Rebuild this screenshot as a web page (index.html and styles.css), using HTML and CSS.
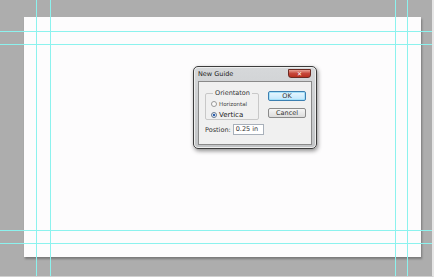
FILE: index.html
```html
<!DOCTYPE html>
<html lang="en">

<head>
    <meta charset="UTF-8">
    <meta name="viewport" content="width=device-width, initial-scale=1.0">
    <title>New Guide</title>
    <link rel="stylesheet" href="styles.css">
</head>

<body>
    <div class="stage">
        <div class="canvas"></div>

        <div class="guide v" style="left: 36px"></div>
        <div class="guide v" style="left: 50px"></div>
        <div class="guide v" style="left: 395px"></div>
        <div class="guide v" style="left: 407px"></div>
        <div class="guide h" style="top: 31px"></div>
        <div class="guide h" style="top: 44px"></div>
        <div class="guide h" style="top: 230px"></div>
        <div class="guide h" style="top: 243px"></div>

        <div class="dialog">
            <div class="titlebar">
                <span class="title">New Guide</span>
                <span class="close">&#x2715;</span>
            </div>
            <div class="body">
                <div class="left">
                    <fieldset class="group">
                        <legend>Orientaton</legend>
                        <label class="radio"><span class="dot"></span>Horizontal</label>
                        <label class="radio big"><span class="dot on"></span>Vertica</label>
                    </fieldset>
                    <div class="pos">
                        <span>Postion:</span>
                        <span class="input">0.25 in</span>
                    </div>
                </div>
                <div class="buttons">
                    <div class="btn ok">OK</div>
                    <div class="btn">Cancel</div>
                </div>
            </div>
        </div>
    </div>
</body>

</html>
```

FILE: styles.css
```css
body {
    margin: 0;
    font-family: "DejaVu Sans", "Liberation Sans", sans-serif;
}

.stage {
    position: relative;
    width: 434px;
    height: 277px;
    background-color: #adadad;
    overflow: hidden;
    padding-top: 17px;
    box-sizing: border-box;
    border-right: 2px solid #e6e6e6;
    border-bottom: 1px solid #d0d0d0;
}

.canvas {
    margin-left: 24px;
    width: 397px;
    height: 240px;
    background-color: #fdfcfd;
    box-shadow: 1px 2px 2px rgba(0, 0, 0, 0.3);
}

.guide {
    position: absolute;
    background-color: #8cf2ee;
}

.guide.v {
    top: 0;
    width: 1px;
    height: 277px;
}

.guide.h {
    left: 0;
    height: 1px;
    width: 434px;
}

.dialog {
    position: absolute;
    left: 193px;
    top: 66px;
    width: 122px;
    height: 81px;
    border: 1px solid #3c3c3c;
    border-radius: 5px;
    background: linear-gradient(#d6d8da, #c2c4c6);
    box-shadow: 1px 2px 4px rgba(0, 0, 0, 0.45), inset 0 0 0 1px #eeeeee;
    display: flex;
    flex-direction: column;
}

.titlebar {
    height: 14px;
    display: flex;
    align-items: center;
    justify-content: space-between;
    padding: 0 5px 0 4px;
}

.title {
    font-size: 6.5px;
    color: #222;
}

.close {
    width: 21px;
    height: 7px;
    margin-top: -2px;
    background: linear-gradient(#e8a194, #c6473a 50%, #b83020);
    border: 1px solid #6b2a22;
    border-radius: 0 0 3px 3px;
    color: #fff;
    font-size: 6px;
    line-height: 7px;
    text-align: center;
    font-weight: bold;
}

.body {
    flex: 1;
    margin: 0 4px 3px 4px;
    background-color: #f0f0f0;
    border: 1px solid #8a8a8a;
    display: flex;
    justify-content: space-between;
    padding: 7px 5px 0 6px;
}

.left {
    display: flex;
    flex-direction: column;
    gap: 4px;
}

.group {
    margin: 0;
    padding: 1px 4px 2px 5px;
    border: 1px solid #c8c8c8;
    border-radius: 2px;
    width: 43px;
    height: 26px;
    box-sizing: content-box;
}

.group legend {
    font-size: 6.5px;
    color: #333;
    padding: 0 2px;
    margin: 0 auto;
}

.radio {
    display: flex;
    align-items: center;
    gap: 2px;
    font-size: 5.5px;
    color: #444;
    height: 11px;
}

.radio.big {
    font-size: 7px;
    color: #222;
}

.dot {
    width: 4px;
    height: 4px;
    border: 1px solid #999;
    border-radius: 50%;
    background-color: #fafafa;
}

.dot.on {
    background: radial-gradient(#2a5fb0 45%, #dfe8f4 55%);
    border-color: #6a7a90;
}

.pos {
    display: flex;
    align-items: center;
    gap: 2px;
    font-size: 6.5px;
    color: #333;
}

.input {
    width: 27px;
    height: 9px;
    line-height: 9px;
    background-color: #fff;
    border: 1px solid #a8b0ba;
    padding-left: 2px;
    font-size: 6.5px;
}

.buttons {
    display: flex;
    flex-direction: column;
    gap: 7px;
    padding-top: 2px;
}

.btn {
    width: 36px;
    height: 8px;
    line-height: 8px;
    text-align: center;
    font-size: 6.5px;
    color: #333;
    border: 1px solid #8a8a8a;
    border-radius: 2px;
    background: linear-gradient(#f6f6f6, #dcdcdc);
}

.btn.ok {
    border-color: #3c7fb1;
    background: linear-gradient(#eaf6fd, #bee6fd);
    box-shadow: inset 0 0 0 1px #a6e0f8;
}
```
